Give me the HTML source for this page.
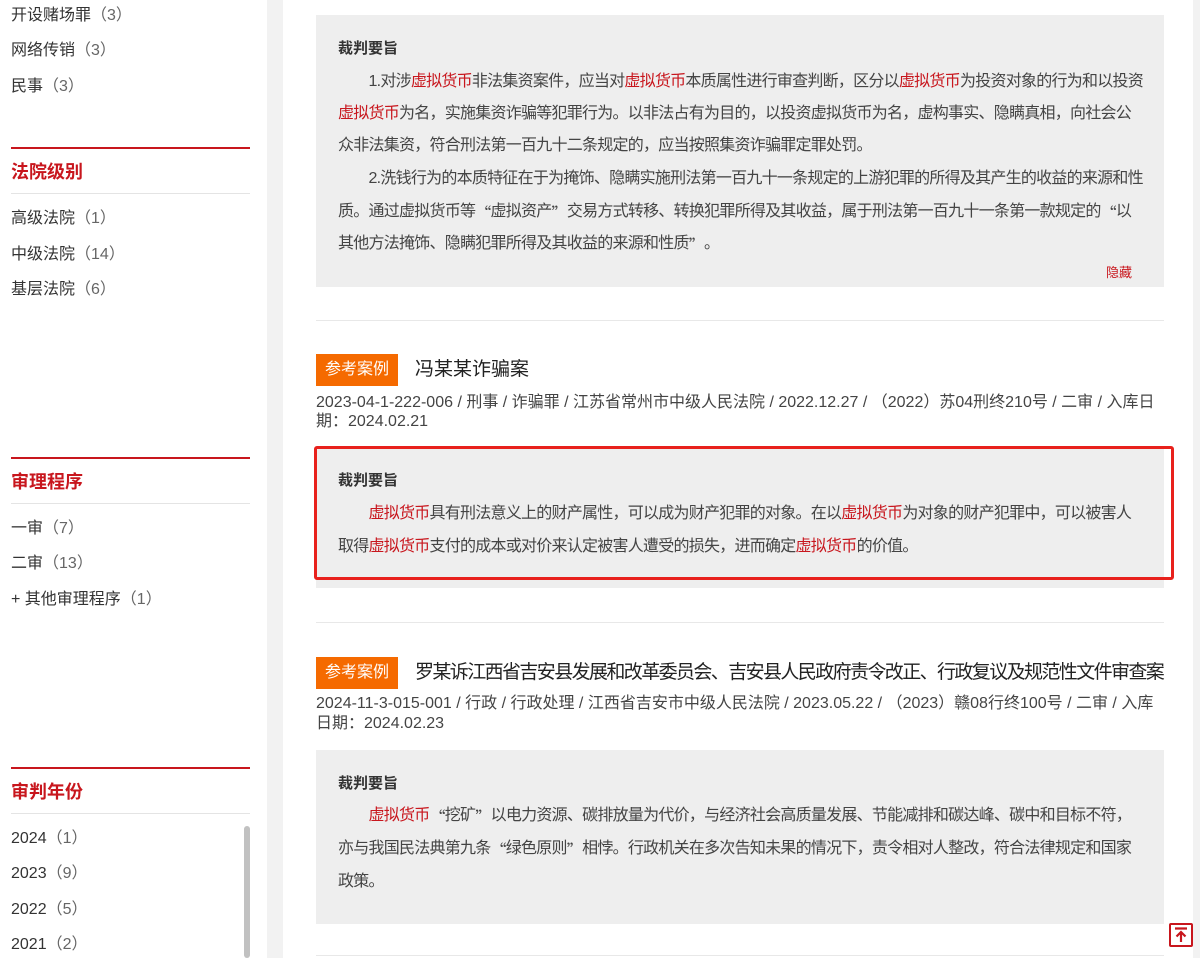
<!DOCTYPE html>
<html><head><meta charset="utf-8"><style>
*{margin:0;padding:0;box-sizing:border-box}
body{width:1200px;height:958px;overflow:hidden;background:#fff;font-family:"Liberation Sans","Noto Sans CJK SC",sans-serif;color:#333;position:relative}
.side{position:absolute;left:0;top:0;width:267px;height:958px;background:#fff}
.strip{position:absolute;left:267px;top:0;width:16px;height:958px;background:#f2f2f2}
.rstrip{position:absolute;left:1193px;top:0;width:7px;height:958px;background:#f2f2f2}
.it{position:absolute;left:11px;font-size:16px;color:#333;white-space:nowrap;line-height:20px}
.it span{color:#666}
.rl{position:absolute;left:11px;width:239px;height:2px;background:#c8161d}
.gl{position:absolute;left:11px;width:239px;height:1px;background:#e4e4e4}
.h{position:absolute;left:11px;font-size:18px;font-weight:bold;color:#c8161d;line-height:22px}
.box{position:absolute;left:316px;width:848px;background:#eeeeee;padding-left:22px}
.box .t{font-size:15px;font-weight:bold;color:#333;position:absolute;left:22px;line-height:20px}
.ln{position:absolute;left:22px;font-size:16px;line-height:20px;white-space:nowrap;color:#444;letter-spacing:-0.75px}
.q{font-family:"Noto Sans CJK SC",sans-serif;line-height:1;vertical-align:top;display:inline-block;height:20px;line-height:20px;overflow:hidden}
.r{color:#c8161d}
.sep{position:absolute;left:316px;width:848px;height:1px;background:#e8e8e8}
.tag{position:absolute;left:316px;width:82px;height:32px;background:#f56a00;color:#fff;font-size:16px;line-height:32px;text-align:center}
.title{position:absolute;left:415px;font-size:19px;color:#222;line-height:24px;white-space:nowrap}
.meta{position:absolute;left:316px;font-size:16px;color:#444;line-height:20px;white-space:nowrap}
</style></head><body>
<div class="side">
<div class="it" style="top:6px">开设赌场罪<span>（3）</span></div>
<div class="it" style="top:41px">网络传销<span>（3）</span></div>
<div class="it" style="top:77px">民事<span>（3）</span></div>
<div class="rl" style="top:147px"></div>
<div class="h" style="top:161px">法院级别</div>
<div class="gl" style="top:193px"></div>
<div class="it" style="top:209px">高级法院<span>（1）</span></div>
<div class="it" style="top:245px">中级法院<span>（14）</span></div>
<div class="it" style="top:280px">基层法院<span>（6）</span></div>
<div class="rl" style="top:457px"></div>
<div class="h" style="top:471px">审理程序</div>
<div class="gl" style="top:503px"></div>
<div class="it" style="top:519px">一审<span>（7）</span></div>
<div class="it" style="top:554px">二审<span>（13）</span></div>
<div class="it" style="top:590px">+ 其他审理程序<span>（1）</span></div>
<div class="rl" style="top:767px"></div>
<div class="h" style="top:781px">审判年份</div>
<div class="gl" style="top:813px"></div>
<div class="it" style="top:829px">2024<span>（1）</span></div>
<div class="it" style="top:864px">2023<span>（9）</span></div>
<div class="it" style="top:900px">2022<span>（5）</span></div>
<div class="it" style="top:935px">2021<span>（2）</span></div>
<div style="position:absolute;left:244px;top:826px;width:6px;height:132px;background:#c1c1c1;border-radius:3px"></div>
</div>
<div class="strip"></div>
<div class="rstrip"></div>

<div class="box" style="top:15px;height:272px">
<div class="t" style="top:24px">裁判要旨</div>
<div class="ln" style="top:57px">　　1.对涉<span class="r">虚拟货币</span>非法集资案件，应当对<span class="r">虚拟货币</span>本质属性进行审查判断，区分以<span class="r">虚拟货币</span>为投资对象的行为和以投资</div>
<div class="ln" style="top:89px"><span class="r">虚拟货币</span>为名，实施集资诈骗等犯罪行为。以非法占有为目的，以投资虚拟货币为名，虚构事实、隐瞒真相，向社会公</div>
<div class="ln" style="top:121px">众非法集资，符合刑法第一百九十二条规定的，应当按照集资诈骗罪定罪处罚。</div>
<div class="ln" style="top:154px">　　2.洗钱行为的本质特征在于为掩饰、隐瞒实施刑法第一百九十一条规定的上游犯罪的所得及其产生的收益的来源和性</div>
<div class="ln" style="top:187px">质。通过虚拟货币等<span class="q">“</span>虚拟资产<span class="q">”</span>交易方式转移、转换犯罪所得及其收益，属于刑法第一百九十一条第一款规定的<span class="q">“</span>以</div>
<div class="ln" style="top:219px">其他方法掩饰、隐瞒犯罪所得及其收益的来源和性质<span class="q">”</span>。</div>
<div style="position:absolute;left:790px;top:247px;font-size:13px;color:#c8161d">隐藏</div>
</div>
<div class="sep" style="top:320px"></div>

<div class="tag" style="top:354px">参考案例</div>
<div class="title" style="top:358px">冯某某诈骗案</div>
<div class="meta" style="top:393px">2023-04-1-222-006 / 刑事 / 诈骗罪 / 江苏省常州市中级人民法院 / 2022.12.27 / （2022）苏04刑终210号 / 二审 / 入库日</div>
<div class="meta" style="top:412px">期：2024.02.21</div>
<div class="box" style="top:447px;height:141px"></div>
<div style="position:absolute;left:314px;top:446px;width:860px;height:134px;border:3px solid #e8211c;border-radius:3px"></div>
<div class="box" style="top:447px;height:130px;background:transparent">
<div class="t" style="top:24px">裁判要旨</div>
<div class="ln" style="top:57px">　　<span class="r">虚拟货币</span>具有刑法意义上的财产属性，可以成为财产犯罪的对象。在以<span class="r">虚拟货币</span>为对象的财产犯罪中，可以被害人</div>
<div class="ln" style="top:90px">取得<span class="r">虚拟货币</span>支付的成本或对价来认定被害人遭受的损失，进而确定<span class="r">虚拟货币</span>的价值。</div>
</div>
<div class="sep" style="top:622px"></div>

<div class="tag" style="top:657px">参考案例</div>
<div class="title" style="top:661px;letter-spacing:-1.6px">罗某诉江西省吉安县发展和改革委员会、吉安县人民政府责令改正、行政复议及规范性文件审查案</div>
<div class="meta" style="top:694px">2024-11-3-015-001 / 行政 / 行政处理 / 江西省吉安市中级人民法院 / 2023.05.22 / （2023）赣08行终100号 / 二审 / 入库</div>
<div class="meta" style="top:714px">日期：2024.02.23</div>
<div class="box" style="top:750px;height:174px">
<div class="t" style="top:24px">裁判要旨</div>
<div class="ln" style="top:56px">　　<span class="r">虚拟货币</span><span class="q">“</span>挖矿<span class="q">”</span>以电力资源、碳排放量为代价，与经济社会高质量发展、节能减排和碳达峰、碳中和目标不符，</div>
<div class="ln" style="top:89px">亦与我国民法典第九条<span class="q">“</span>绿色原则<span class="q">”</span>相悖。行政机关在多次告知未果的情况下，责令相对人整改，符合法律规定和国家</div>
<div class="ln" style="top:122px">政策。</div>
</div>
<div class="sep" style="top:955px"></div>

<div style="position:absolute;left:1169px;top:923px;width:24px;height:24px;border:2px solid #c8161d;border-radius:2px;background:#fff">
<svg width="20" height="20" viewBox="0 0 20 20" style="position:absolute;left:0;top:0"><path d="M4 3.5H16M10 17V7M5.5 11.5L10 7L14.5 11.5" stroke="#c8161d" stroke-width="2.2" fill="none"/></svg>
</div>
</body></html>
